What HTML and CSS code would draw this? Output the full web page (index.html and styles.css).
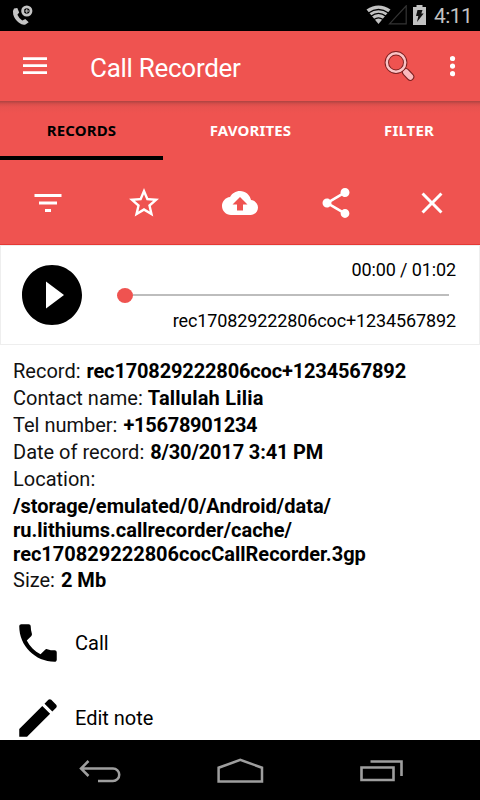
FILE: index.html
```html
<!DOCTYPE html>
<html lang="en">

<head>
    <meta charset="UTF-8">
    <meta name="viewport" content="width=device-width, initial-scale=1.0">
    <title>Call Recorder</title>
    <link rel="stylesheet" href="styles.css">
</head>

<body>
    <div class="phone">
        <div class="status">
            <svg class="call-state" width="22" height="22" viewBox="0 0 22 22">
                <path d="M2 3.600Q.2 6 1.200 9.500Q2.600 14.500 7 17.800Q10.500 20.300 13.500 19.400L16.700 17.200L13.300 14.100L10.300 15.600Q7 13.500 5.400 9.800L7.200 7.500L5.300 3Z" fill="#c4c4c4"/>
                <circle cx="14.800" cy="6" r="4.200" fill="none" stroke="#c4c4c4" stroke-width="2.800"/>
                <path d="M14.800 3.800v4.400M12.600 6h4.400" stroke="#c4c4c4" stroke-width="1"/>
            </svg>
            <div class="signals">
                <svg width="41" height="20" viewBox="0 0 41 20">
                    <path d="M.5 4.500Q12.500-3.500 24.500 4.500L12.500 19Z" fill="#c2c2c2"/>
                    <path d="M2.500 8Q12.500 1 22.500 8M5 11.300Q12.500 5.500 20 11.300M8 14.600Q12.500 11 17 14.600" fill="none" stroke="#000" stroke-width="1.300"/>
                    <path d="M23.500 18.800L40.200.8V18.800Z" fill="none" stroke="#343434" stroke-width="1.200"/>
                </svg>
                <svg width="13" height="20" viewBox="0 0 13 20">
                    <path d="M0 2h3.500V0h6v2H13v18H0z" fill="#c2c2c2"/>
                    <path d="M4.500 5h5L8.300 8.500h2.400L4 17l1.300-6H3z" fill="#111"/>
                </svg>
                <span class="clock">4:11</span>
            </div>
        </div>

        <div class="toolbar">
            <svg width="24" height="18" viewBox="0 0 24 18">
                <path d="M0 1.600h24M0 8.600h24M0 15.600h24" stroke="#fff" stroke-width="2.700"/>
            </svg>
            <h1>Call Recorder</h1>
            <svg class="search" width="32" height="32" viewBox="0 0 32 32">
                <path d="M18 18.500l3.500 3.500" stroke="#8e2525" stroke-width="3.500"/>
                <path d="M22 22.200l4.300 4.600" stroke="#7c2020" stroke-width="8" stroke-linecap="round"/>
                <path d="M22 22.200l4.300 4.600" stroke="#fbb9bd" stroke-width="5.800" stroke-linecap="round"/>
                <circle cx="12" cy="12.500" r="9.200" fill="none" stroke="#7c2020" stroke-width="4.400"/>
                <circle cx="12" cy="12.500" r="9.200" fill="none" stroke="#fbc4c6" stroke-width="2.500"/>
            </svg>
            <svg width="6" height="22" viewBox="0 0 6 22" fill="#fff">
                <circle cx="2.500" cy="3.500" r="2.600"/>
                <circle cx="2.500" cy="11.100" r="2.600"/>
                <circle cx="2.500" cy="18.700" r="2.600"/>
            </svg>
        </div>

        <div class="tabs">
            <div class="tab active"><span>RECORDS</span></div>
            <div class="tab favorites"><span>FAVORITES</span></div>
            <div class="tab filter"><span>FILTER</span></div>
        </div>

        <div class="actions">
            <svg viewBox="0 0 24 24"><path d="M10 18h4v-2h-4v2zM3 6v2h18V6H3zm3 7h12v-2H6v2z"/></svg>
            <svg viewBox="0 0 24 24"><path d="M22 9.240l-7.190-.62L12 2 9.190 8.630 2 9.240l5.460 4.730L5.820 21 12 17.270 18.180 21l-1.630-7.030L22 9.240zM12 15.400l-3.760 2.270 1-4.280-3.320-2.880 4.380-.38L12 6.100l1.710 4.040 4.380.38-3.320 2.880 1 4.280L12 15.400z"/></svg>
            <svg viewBox="0 0 24 24"><path d="M19.350 10.040C18.670 6.590 15.640 4 12 4 9.110 4 6.600 5.640 5.350 8.040 2.340 8.360 0 10.910 0 14c0 3.310 2.690 6 6 6h13c2.760 0 5-2.240 5-5 0-2.640-2.050-4.780-4.650-4.960zM14 13v4h-4v-4H7l5-5 5 5h-3z"/></svg>
            <svg viewBox="0 0 24 24"><path d="M18 16.080c-.76 0-1.440.3-1.960.77L8.910 12.700c.05-.23.090-.46.090-.7s-.04-.47-.09-.7l7.050-4.110c.54.5 1.250.81 2.040.81 1.660 0 3-1.340 3-3s-1.340-3-3-3-3 1.340-3 3c0 .24.040.47.090.7L8.040 9.810C7.500 9.310 6.790 9 6 9c-1.660 0-3 1.340-3 3s1.340 3 3 3c.79 0 1.500-.31 2.040-.81l7.120 4.160c-.05.21-.08.43-.08.65 0 1.610 1.310 2.920 2.920 2.920s2.920-1.310 2.920-2.920-1.310-2.920-2.920-2.920z"/></svg>
            <svg viewBox="0 0 24 24"><path d="M19 6.410L17.590 5 12 10.590 6.410 5 5 6.410 10.590 12 5 17.590 6.410 19 12 13.410 17.590 19 19 17.590 13.410 12z"/></svg>
        </div>

        <div class="player">
            <svg width="60" height="60" viewBox="2 2 20 20">
                <path d="M12 2C6.480 2 2 6.480 2 12s4.480 10 10 10 10-4.480 10-10S17.520 2 12 2zm-2 14.500v-9l6 4.500-6 4.500z"/>
            </svg>
            <div class="track">
                <div class="time">00:00 / 01:02</div>
                <div class="seek"><div class="thumb"></div><div class="line"></div></div>
                <div class="file">rec170829222806coc+1234567892</div>
            </div>
        </div>

        <div class="info">
            <p>Record: <b class="record">rec170829222806coc+1234567892</b></p>
            <p>Contact name: <b class="contact">Tallulah Lilia</b></p>
            <p>Tel number: <b class="tel">+15678901234</b></p>
            <p>Date of record: <b class="date">8/30/2017 3:41 PM</b></p>
            <p>Location:</p>
            <p class="path"><b>/storage/emulated/0/Android/data/<br>ru.lithiums.callrecorder/cache/<br>rec170829222806cocCallRecorder.3gp</b></p>
            <p>Size: <b class="size">2 Mb</b></p>
        </div>

        <div class="options">
            <div class="option">
                <svg viewBox="0 0 24 24"><path d="M6.620 10.790c1.440 2.830 3.760 5.140 6.590 6.590l2.200-2.200c.27-.27.670-.36 1.020-.24 1.120.37 2.330.57 3.570.57.55 0 1 .45 1 1V20c0 .55-.45 1-1 1-9.390 0-17-7.610-17-17 0-.55.45-1 1-1h3.500c.55 0 1 .45 1 1 0 1.250.2 2.450.57 3.570.11.35.03.74-.25 1.020l-2.200 2.200z"/></svg>
                <span>Call</span>
            </div>
            <div class="option">
                <svg viewBox="0 0 24 24"><path d="M3 17.250V21h3.750L17.810 9.940l-3.750-3.750L3 17.250zM20.710 7.040c.39-.39.39-1.020 0-1.410l-2.340-2.340c-.39-.39-1.020-.39-1.410 0l-1.830 1.830 3.750 3.750 1.830-1.830z"/></svg>
                <span>Edit note</span>
            </div>
        </div>

        <div class="navbar">
            <svg width="44" height="26" viewBox="0 0 44 26">
                <path d="M2.500 10.500H35a6 6 0 0 1 0 12.500H20M10.500 3L3 10.500l7.500 7.500" fill="none" stroke="#9e9e9e" stroke-width="2.500"/>
            </svg>
            <svg width="48" height="26" viewBox="0 0 48 26">
                <path d="M1.600 23.500V9.700L23.300 1.900 45 9.700v13.800z" fill="none" stroke="#9e9e9e" stroke-width="2.500"/>
            </svg>
            <svg width="44" height="24" viewBox="0 0 44 24">
                <path d="M1.500 8.500h32V21h-32zM10.500 2.500h31V17" fill="none" stroke="#9e9e9e" stroke-width="2.600"/>
            </svg>
        </div>
    </div>
</body>

</html>
```

FILE: styles.css
```css
* {
    box-sizing: border-box;
    margin: 0;
    padding: 0;
}

body {
    background-color: #fff;
    color: #000;
    font-family: Roboto, sans-serif;
    font-size: 20px;
}

svg {
    display: block;
    flex-shrink: 0;
}

.phone {
    display: flex;
    flex-direction: column;
    width: 480px;
    height: 800px;
    overflow: hidden;
}

.status {
    display: flex;
    justify-content: space-between;
    height: 31px;
    padding: 5px 9px 0 12px;
    background-color: #000;
}

.signals {
    display: flex;
    gap: 6px;
}

.clock {
    width: 37px;
    margin-left: 2px;
    color: #c2c2c2;
    font-size: 21px;
    letter-spacing: -0.6px;
    line-height: 23px;
    white-space: nowrap;
}

.toolbar {
    display: flex;
    align-items: center;
    height: 70px;
    padding: 0 24px 0 23px;
    background-color: #ef5350;
}

.toolbar h1 {
    flex: 1;
    margin: 3px 0 0 43px;
    color: #fff;
    font-size: 26px;
    font-weight: 400;
    letter-spacing: -0.28px;
}

.search {
    margin-right: 34px;
}

.tabs {
    display: flex;
    height: 59px;
    background: linear-gradient(#ad4341, #d84e4b 3px, #e8524f 6px, #ef5350 12px);
}

.tab {
    width: 163px;
    padding-top: 19px;
    border-bottom: 4px solid transparent;
    color: #fff;
    font-family: "Noto Sans", sans-serif;
    font-size: 15px;
    font-weight: 700;
    letter-spacing: 0.15px;
    line-height: 20px;
    text-align: center;
}

.favorites {
    width: 175px;
}

.filter {
    width: 142px;
}

.active {
    border-color: #000;
    color: #000;
}

.actions {
    display: flex;
    align-items: center;
    justify-content: space-around;
    height: 85px;
    padding-top: 1px;
    border-bottom: 1px solid #e53935;
    background-color: #ef5350;
    fill: #fff;
}

.actions svg {
    width: 36px;
    height: 36px;
}

.player {
    display: flex;
    align-items: center;
    height: 100px;
    padding: 0 23px 0 21px;
    border: 1px solid #eee;
}

.track {
    flex: 1;
    margin-left: 35px;
    font-size: 18px;
    letter-spacing: -0.12px;
    line-height: 24px;
    text-align: right;
}

.seek {
    display: flex;
    align-items: center;
    height: 27px;
    padding-right: 7px;
}

.thumb {
    width: 16px;
    height: 15px;
    border-radius: 50%;
    background-color: #ef5350;
}

.line {
    flex: 1;
    height: 2px;
    background-color: #bdbdbd;
}

.info {
    padding: 13px 13px 0;
    color: #111;
    line-height: 27px;
}

.info b {
    color: #000;
    font-weight: 700;
}

.record,
.date {
    margin-left: 1px;
    letter-spacing: -0.15px;
}

.contact {
    letter-spacing: 0.2px;
}

.tel {
    margin-left: 1px;
    letter-spacing: -0.27px;
}

.size {
    margin-left: 1px;
}

.info .path {
    padding: 1px 0;
    line-height: 24px;
}

.options {
    flex: 1;
    min-height: 0;
    margin-top: 11px;
    overflow: hidden;
}

.option {
    display: flex;
    align-items: center;
    gap: 12px;
    height: 75px;
    padding-left: 13px;
}

.option svg {
    width: 50px;
    height: 50px;
}

.navbar {
    display: flex;
    align-items: center;
    justify-content: space-between;
    height: 60px;
    padding: 2px 76px 0 78px;
    background-color: #000;
}
```
